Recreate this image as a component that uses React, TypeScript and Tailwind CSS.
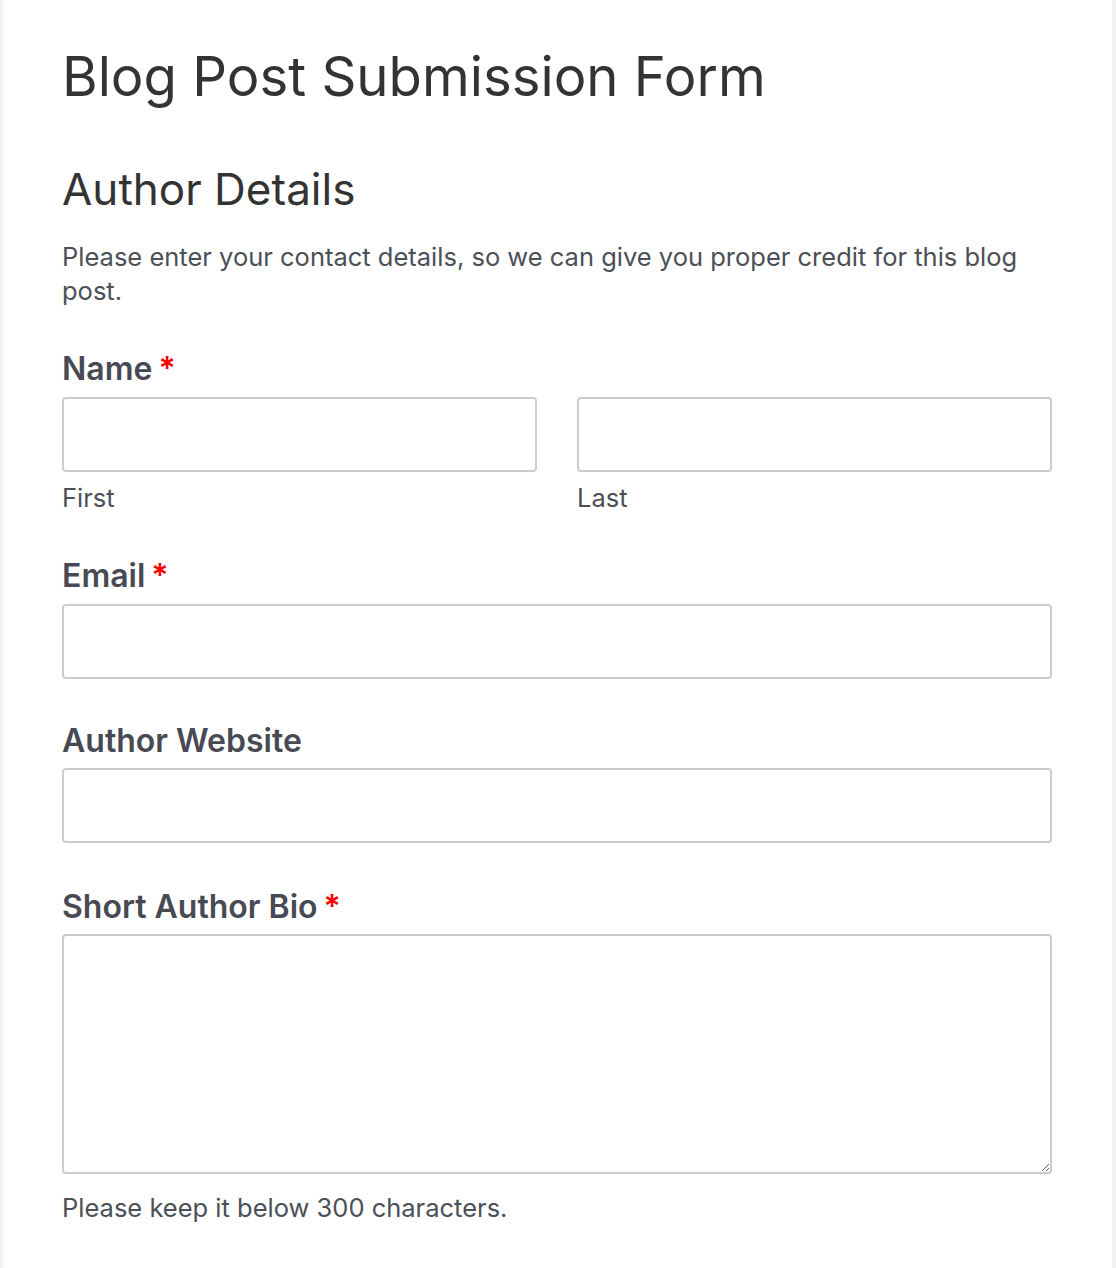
const font = { fontFamily: "Inter, 'Noto Sans', sans-serif" };

function Label({ text, required }: { text: string; required?: boolean }) {
  return (
    <label className="block text-[32px] font-semibold leading-[36px] text-[#474a52]">
      {text}
      {required && <span className="ml-[6px] text-[#ff0000]">*</span>}
    </label>
  );
}

const inputCls =
  "block h-[75px] w-full rounded-[4px] border-2 border-[#cccccc] bg-white px-4 text-[22px] outline-none";

export default function App() {
  return (
    <div className="flex min-h-[1268px] bg-[#f2f2f2] pl-[3px] pr-[4px]" style={font}>
      <div className="flex-1 bg-white pl-[59px] pr-[60px] pt-[40px] pb-[45px]">
        <h1 className="text-[54.5px] font-normal leading-[72px] text-[#333333]">
          Blog Post Submission Form
        </h1>

        <h2 className="mt-[49px] text-[44px] font-normal leading-[56px] text-[#333333]">
          Author Details
        </h2>
        <p className="mt-[23px] text-[25.5px] leading-[34px] text-[#4b4f58]">
          Please enter your contact details, so we can give you proper credit for this blog post.
        </p>

        <div className="mt-[43px]">
          <Label text="Name" required />
          <div className="mt-[10px] grid grid-cols-2 gap-[40px]">
            <div>
              <input className={inputCls} />
              <div className="mt-[11px] text-[25.5px] leading-[30px] text-[#4b4f58]">First</div>
            </div>
            <div>
              <input className={inputCls} />
              <div className="mt-[11px] text-[25.5px] leading-[30px] text-[#4b4f58]">Last</div>
            </div>
          </div>
        </div>

        <div className="mt-[45px]">
          <Label text="Email" required />
          <input className={`mt-[10px] ${inputCls}`} />
        </div>

        <div className="mt-[44px]">
          <Label text="Author Website" />
          <input className={`mt-[9px] ${inputCls}`} />
        </div>

        <div className="mt-[46px]">
          <Label text="Short Author Bio" required />
          <textarea className="mt-[9px] block h-[240px] w-full resize-y rounded-[4px] border-2 border-[#cccccc] bg-white px-4 py-3 text-[22px] outline-none" />
          <div className="mt-[19px] text-[25.5px] leading-[30px] text-[#4b4f58]">
            Please keep it below 300 characters.
          </div>
        </div>
      </div>
    </div>
  );
}
